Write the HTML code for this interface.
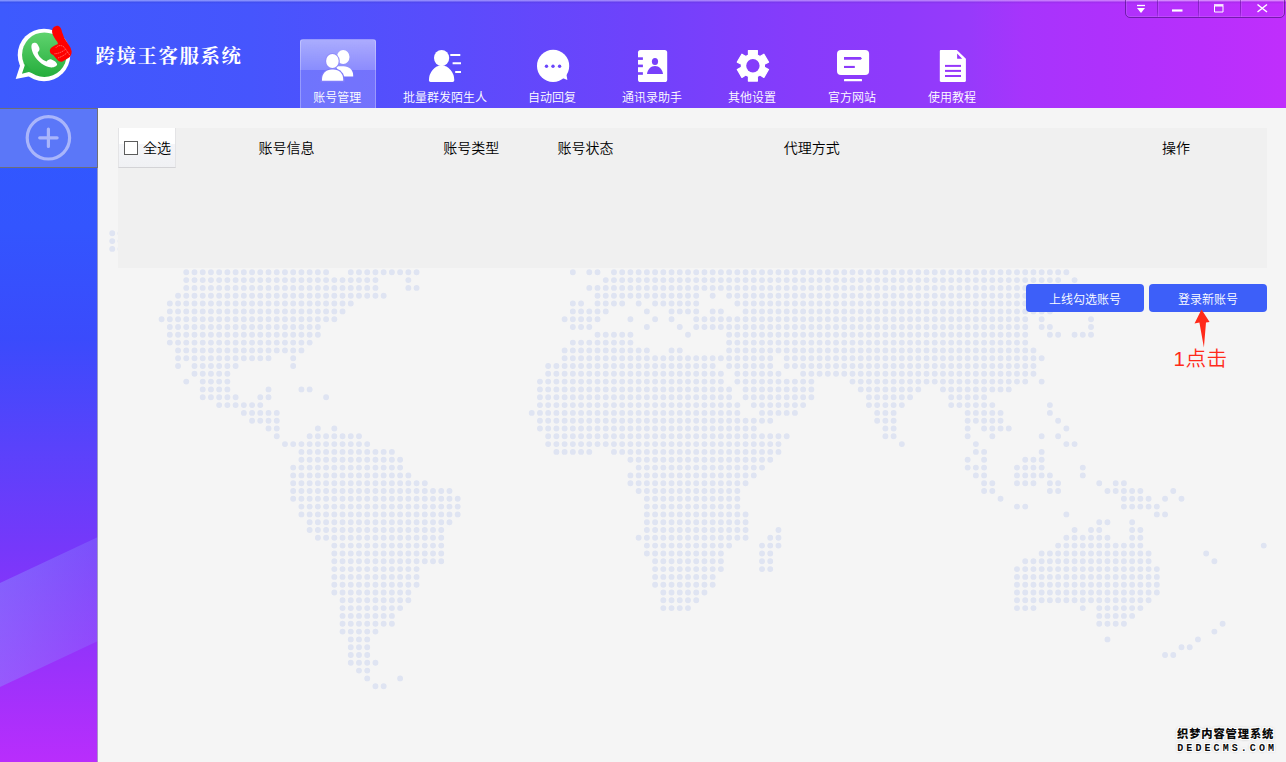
<!DOCTYPE html>
<html lang="zh-CN">
<head>
<meta charset="utf-8">
<title>跨境王客服系统</title>
<style>
*{box-sizing:border-box;margin:0;padding:0}
html,body{width:1286px;height:762px;overflow:hidden;background:#f5f5f5}
body{position:relative;font-weight:350;font-family:"Liberation Sans","Noto Sans CJK SC",sans-serif;color:#000}
#hdr{position:absolute;left:0;top:0;width:1286px;height:108px;
 background:linear-gradient(90deg,#3d5afe 0px,#4655fd 250px,#5a4cfc 450px,#6f42fb 640px,#873bfb 800px,#8f3afb 900px,#973afb 970px,#a734fc 1025px,#ae31fc 1100px,#b72ffc 1200px,#c02efc 1286px);}
#hdr .topline{position:absolute;left:0;top:0;width:1286px;height:4px;background:linear-gradient(180deg,rgba(255,255,255,.36) 0,rgba(255,255,255,.32) 1px,rgba(0,0,80,.09) 2px,rgba(0,0,80,0) 4px)}
#title{position:absolute;left:95.5px;top:40.5px;height:32px;line-height:32px;font-family:"Liberation Serif","Noto Serif CJK SC",serif;font-weight:700;font-size:19.4px;color:#fff;white-space:nowrap;letter-spacing:1.62px}
#logo{position:absolute;left:10px;top:20px}
.nav{position:absolute;top:39px;height:69px;color:#fff;font-size:12px;text-align:center;white-space:nowrap}
.nav .lbl{position:absolute;left:-40px;right:-40px;top:51px;height:16px;line-height:16px;text-align:center}
.nav.act .lbl{top:50px;left:-41.5px;right:-40px}
.nav.act{border:1px solid rgba(255,255,255,.28);border-bottom:none;border-radius:3px 3px 0 0;
 background:linear-gradient(180deg,rgba(255,255,255,.52) 0,rgba(255,255,255,.34) 30px,rgba(255,255,255,.2) 30.5px,rgba(255,255,255,.2) 100%)}
#wc{position:absolute;left:1125px;top:-1px;width:160px;height:19px;border:1px solid rgba(60,10,110,.55);border-radius:0 0 5px 5px;box-shadow:inset 0 0 0 1px rgba(255,255,255,.12)}
#wc i{position:absolute;top:0;width:1px;height:17px;background:linear-gradient(180deg,rgba(60,10,110,.4) 0,rgba(60,10,110,.35) 70%,rgba(60,10,110,.1) 100%);box-shadow:1px 0 0 rgba(255,255,255,.1)}
#side{position:absolute;left:0;top:108px;width:98px;height:654px;overflow:hidden;
 background:linear-gradient(180deg,#3058ff 0,#3355fe 120px,#3a4bfc 230px,#5a42fb 340px,#7638fa 440px,#9a32fb 560px,#b92dfc 654px)}
#side .band{position:absolute;left:0;top:0;width:98px;height:654px;background:linear-gradient(100deg,rgba(140,150,255,.6) 0,rgba(140,130,255,.22) 100%);clip-path:polygon(0 475px,98px 429px,98px 533px,0 579px)}
#side .edge{position:absolute;right:0;top:0;width:1px;height:654px;background:rgba(170,170,190,.8)}
#add{position:absolute;left:0;top:0;width:98px;height:60px;background:#5b77f8;border:1px solid #6d6f78;border-left:none}
#tbl{position:absolute;left:118px;top:128px;width:1149px;height:140px;background:#f0f0f0}
#tbl .h{position:absolute;top:10px;height:20px;line-height:20px;font-size:14px;width:100px;margin-left:-50px;text-align:center;white-space:nowrap}
#selall{position:absolute;left:0;top:0;width:58px;height:40px;border:1px solid #e4e4e6;border-bottom-color:#d3d3d6;border-top:none;
 background:linear-gradient(180deg,#ffffff 0,#ffffff 16px,#f4f5f8 16.5px,#f0f1f4 100%);font-size:14px}
#selall .cb{position:absolute;left:5px;top:13px;width:14px;height:14px;border:1px solid #5c5c5c;background:#fff}
#selall span{position:absolute;left:24px;top:10px;line-height:20px;height:20px}
.btn{position:absolute;top:284px;height:28px;line-height:32px;border-radius:4px;background:#3d5ff9;color:#fff;font-size:12px;text-align:center;white-space:nowrap}
#hint{position:absolute;left:1173.6px;top:347px;font-size:20.6px;line-height:24px;color:#ff2a1a;white-space:nowrap;letter-spacing:.4px}
#wm{position:absolute;left:1177px;top:726px;width:102px;height:28px;font-weight:900;color:#0a0a0a;white-space:nowrap;text-shadow:-1px 0 0 #fff,1px 0 0 #fff,0 -1px 0 #fff,0 1px 0 #fff,-1px -1px 0 #fff,1px 1px 0 #fff,-1px 1px 0 #fff,1px -1px 0 #fff,0 0 3px rgba(120,120,120,.9)}
#wm .a{position:absolute;left:0;top:.3px;font-size:11.3px;line-height:16px;letter-spacing:.85px;font-family:"Liberation Sans","Noto Sans CJK SC",sans-serif}
#wm .b{position:absolute;left:.3px;top:16.9px;font-size:10px;line-height:12px;letter-spacing:3.07px;font-family:"Liberation Mono",monospace;font-weight:700}
#map{position:absolute;left:98px;top:108px}
</style>
</head>
<body>
<svg id="map" width="1188" height="654" viewBox="98 108 1188 654"><defs><filter id="bl" x="98" y="108" width="1188" height="654" filterUnits="userSpaceOnUse"><feGaussianBlur stdDeviation="0.55"/></filter></defs><g id="dots"><path fill="none" stroke="#dfe4f2" stroke-width="5.9" filter="url(#bl)" stroke-linecap="round" stroke-dasharray="0 8.225" d="M112.25 233.2h8.42M112.25 241.1h8.42M112.25 248.9h8.42M186.27 272.3h140.03M350.77 272.3h66.00M572.85 272.3h0.20M589.30 272.3h8.43M613.98 272.3h452.57M186.27 280.1h189.38M408.35 280.1h0.20M605.75 280.1h452.57M1074.57 280.1h0.20M186.27 287.9h189.38M408.35 287.9h8.42M589.30 287.9h469.03M178.05 295.7h205.82M597.52 295.7h98.90M712.67 295.7h0.20M729.12 295.7h320.97M169.82 303.5h181.15M572.85 303.5h8.42M597.52 303.5h24.87M638.65 303.5h0.20M655.10 303.5h41.33M737.35 303.5h304.52M169.82 311.4h172.92M572.85 311.4h33.10M646.88 311.4h0.20M671.55 311.4h24.88M712.67 311.4h8.43M745.58 311.4h304.52M161.60 319.2h172.92M564.62 319.2h33.10M630.42 319.2h0.20M655.10 319.2h0.20M671.55 319.2h0.20M696.23 319.2h329.20M1041.67 319.2h0.20M1091.02 319.2h0.20M169.82 327.0h148.25M572.85 327.0h16.65M646.88 327.0h0.20M679.77 327.0h0.20M696.23 327.0h329.20M1041.67 327.0h8.42M1091.02 327.0h0.20M169.82 334.8h148.25M597.52 334.8h33.10M688.00 334.8h0.20M729.12 334.8h296.30M1049.90 334.8h8.43M1074.57 334.8h16.65M169.82 342.6h140.02M572.85 342.6h57.77M729.12 342.6h296.30M178.05 350.4h123.57M564.62 350.4h82.45M671.55 350.4h8.43M729.12 350.4h304.52M178.05 358.2h90.67M293.20 358.2h0.20M564.62 358.2h205.82M786.70 358.2h255.17M178.05 366.0h0.20M194.50 366.0h41.33M293.20 366.0h0.20M548.17 366.0h164.70M729.12 366.0h41.33M786.70 366.0h246.95M194.50 373.8h33.10M548.17 373.8h172.93M737.35 373.8h41.33M803.15 373.8h230.50M186.27 381.6h0.20M202.72 381.6h24.87M539.95 381.6h181.15M737.35 381.6h74.22M852.50 381.6h172.92M1041.67 381.6h0.20M202.72 389.4h24.87M268.52 389.4h0.20M301.42 389.4h8.43M539.95 389.4h189.38M745.58 389.4h66.00M860.73 389.4h57.77M942.98 389.4h66.00M202.72 397.3h33.10M260.30 397.3h8.43M326.10 397.3h0.20M539.95 397.3h189.38M745.58 397.3h66.00M868.95 397.3h41.33M951.20 397.3h33.10M219.17 405.1h41.32M539.95 405.1h197.60M753.80 405.1h49.55M868.95 405.1h33.10M951.20 405.1h41.33M1049.90 405.1h0.20M243.85 412.9h33.10M531.73 412.9h205.82M762.02 412.9h33.10M877.17 412.9h16.65M967.65 412.9h33.10M1049.90 412.9h0.20M252.07 420.7h24.88M539.95 420.7h230.50M877.17 420.7h16.65M967.65 420.7h33.10M1058.12 420.7h0.20M268.52 428.5h8.43M317.88 428.5h0.20M334.32 428.5h0.20M539.95 428.5h214.05M885.40 428.5h8.43M967.65 428.5h0.20M984.10 428.5h24.87M1066.35 428.5h0.20M276.75 436.3h0.20M309.65 436.3h49.55M548.17 436.3h238.73M885.40 436.3h8.43M967.65 436.3h0.20M992.32 436.3h0.20M1041.67 436.3h0.20M1058.12 436.3h0.20M284.98 444.1h82.45M548.17 444.1h230.50M901.85 444.1h0.20M975.88 444.1h0.20M1066.35 444.1h8.42M301.42 451.9h90.68M556.40 451.9h33.10M613.98 451.9h164.70M975.88 451.9h8.43M1041.67 451.9h0.20M301.42 459.7h98.90M630.42 459.7h140.03M967.65 459.7h0.20M984.10 459.7h0.20M1025.22 459.7h16.65M293.20 467.6h107.13M638.65 467.6h123.58M967.65 467.6h16.65M1017.00 467.6h24.87M1082.80 467.6h0.20M293.20 475.4h115.35M630.42 475.4h123.58M975.88 475.4h8.43M1017.00 475.4h33.10M1082.80 475.4h0.20M293.20 483.2h131.80M630.42 483.2h115.35M984.10 483.2h8.42M1017.00 483.2h16.65M1049.90 483.2h8.43M1099.25 483.2h0.20M1115.70 483.2h8.43M293.20 491.0h156.48M638.65 491.0h98.90M984.10 491.0h8.42M1049.90 491.0h8.43M1107.47 491.0h33.10M1173.27 491.0h0.20M293.20 498.8h164.70M646.88 498.8h90.68M1000.55 498.8h0.20M1123.92 498.8h24.87M1165.05 498.8h0.20M1181.50 498.8h0.20M301.42 506.6h156.47M646.88 506.6h90.68M1017.00 506.6h8.42M1123.92 506.6h33.10M301.42 514.4h156.47M646.88 514.4h98.90M1066.35 514.4h0.20M1156.82 514.4h8.43M309.65 522.2h140.03M646.88 522.2h98.90M1099.25 522.2h8.42M1132.15 522.2h0.20M309.65 530.0h131.80M646.88 530.0h98.90M778.48 530.0h0.20M1074.57 530.0h0.20M1091.02 530.0h8.43M1132.15 530.0h8.43M317.88 537.8h123.58M638.65 537.8h107.13M770.25 537.8h8.43M1066.35 537.8h41.33M1132.15 537.8h8.43M334.32 545.6h107.13M646.88 545.6h82.45M762.02 545.6h16.65M1058.12 545.6h82.45M1263.75 545.6h0.20M334.32 553.5h107.13M646.88 553.5h74.22M762.02 553.5h8.43M1041.67 553.5h107.12M1206.17 553.5h0.20M334.32 561.3h107.13M655.10 561.3h66.00M762.02 561.3h8.43M1025.22 561.3h123.58M1214.40 561.3h0.20M334.32 569.1h82.45M655.10 569.1h66.00M762.02 569.1h8.43M1017.00 569.1h140.02M334.32 576.9h82.45M655.10 576.9h57.77M1017.00 576.9h140.02M334.32 584.7h82.45M655.10 584.7h57.77M1017.00 584.7h140.02M334.32 592.5h74.23M663.32 592.5h41.33M1017.00 592.5h140.02M342.55 600.3h66.00M663.32 600.3h33.10M1017.00 600.3h131.80M342.55 608.1h57.78M663.32 608.1h24.88M1017.00 608.1h16.65M1082.80 608.1h0.20M1099.25 608.1h41.33M342.55 615.9h49.55M1099.25 615.9h33.10M342.55 623.8h49.55M1099.25 623.8h24.87M1222.62 623.8h0.20M342.55 631.6h33.10M1214.40 631.6h0.20M350.77 639.4h16.65M1107.47 639.4h0.20M1197.95 639.4h0.20M350.77 647.2h16.65M1181.50 647.2h8.42M350.77 655.0h16.65M1165.05 655.0h8.42M350.77 662.8h24.88M359.00 670.6h8.43M367.23 678.4h0.20M400.12 678.4h0.20M375.45 686.2h8.42"/></g></svg>

<div id="hdr">
 <div class="topline"></div>
 <svg id="logo" width="70" height="70" viewBox="0 0 762 762">
  <defs><linearGradient id="gg" x1="0" y1="0" x2="0" y2="1"><stop offset="0" stop-color="#5fd36e"/><stop offset="1" stop-color="#25ad3c"/></linearGradient></defs>
  <circle cx="370" cy="380" r="286" fill="#fff"/>
  <path d="M62 642 L118 470 L300 650 L215 612 Z" fill="#fff"/>
  <circle cx="374" cy="378" r="243" fill="url(#gg)"/>
  <path d="M130 586 L168 470 L262 582 L205 566 Z" fill="#2bb143"/>
  <path d="M262 248 C 285 240, 305 262, 318 300 C 326 322, 318 338, 302 352 C 300 384, 350 440, 398 452 C 412 434, 432 422, 452 430 C 482 442, 510 462, 513 482 C 512 502, 480 518, 450 516 C 380 512, 296 452, 260 382 C 238 340, 226 290, 238 264 C 244 252, 254 250, 262 248 Z" fill="#fff"/>
  <path d="M505 64 C 540 60, 560 90, 566 130 L 592 200 C 622 250, 662 290, 671 340 C 674 380, 652 400, 640 412 L 572 452 C 540 462, 520 440, 500 416 L 470 382 C 440 372, 424 340, 440 314 C 450 294, 490 276, 522 262 L 516 240 C 490 200, 455 160, 458 116 C 460 86, 480 68, 505 64 Z" fill="#fe0000"/>
  <path d="M500 302 C 520 272, 570 270, 592 300 M484 368 C 524 368, 580 342, 602 320 M522 414 C 560 400, 600 380, 626 350 M592 300 L 652 384" stroke="#ffd8d0" stroke-width="5" stroke-dasharray="14 7" fill="none"/>
 </svg>
 <div id="title">跨境王客服系统</div>

 <div class="nav act" style="left:300px;width:76px"><div class="lbl">账号管理</div></div>
 <div class="nav" style="left:405px;width:80px"><div class="lbl">批量群发陌生人</div></div>
 <div class="nav" style="left:512px;width:80px"><div class="lbl">自动回复</div></div>
 <div class="nav" style="left:612px;width:80px"><div class="lbl">通讯录助手</div></div>
 <div class="nav" style="left:712px;width:80px"><div class="lbl">其他设置</div></div>
 <div class="nav" style="left:812px;width:80px"><div class="lbl">官方网站</div></div>
 <div class="nav" style="left:912px;width:80px"><div class="lbl">使用教程</div></div>


 <svg id="icons" width="1286" height="108" viewBox="0 0 1286 108" style="position:absolute;left:0;top:0" fill="#fff">
  <!-- account management -->
  <ellipse cx="343.2" cy="57" rx="6.3" ry="6.9"/>
  <path d="M336 66.2h7.5c5.6 0 9.7 3.9 9.7 9.2v1h-12z"/>
  <ellipse cx="332.4" cy="61" rx="7.4" ry="7.9" fill="#8f8bfb"/>
  <path d="M320.6 82.2v-2.600000000000001c0-6.2 4.6-11 11.2-11h1.6c6.600000000000001 0 11.2 4.8 11.2 11v2.600000000000001z" fill="#7f7cfb"/>
  <ellipse cx="332.4" cy="61" rx="6.3" ry="6.9"/>
  <path d="M322 80.8v-1.6c0-5.4 4.100000000000001-9.6 9.8-9.6h1.6c5.7 0 9.8 4.2 9.8 9.6v1.6z"/>
  <!-- bulk send -->
  <ellipse cx="441.6" cy="58.1" rx="7.6" ry="8.1"/>
  <path d="M428.9 80.2A12.7 14.6 0 0 1 454.3 80.2Q454.3 82 452.6 82H430.6Q428.9 82 428.9 80.2Z"/>
  <path d="M450.3 55h10M452.6 63.3h8.4M455.200000000000003 72h5.8" stroke="#fff" stroke-width="2.1" fill="none"/>
  <!-- auto reply -->
  <circle cx="553.1" cy="65.9" r="16.1"/>
  <path d="M560 77l7.4 3-1.6-9z"/>
  <g fill="#6a45fb"><circle cx="546.5" cy="66.3" r="1.7"/><circle cx="553" cy="66.3" r="1.7"/><circle cx="559.6" cy="66.3" r="1.7"/></g>
  <!-- contacts -->
  <rect x="638" y="49.9" width="29.2" height="32.1" rx="2.6"/>
  <g fill="#7840fb"><rect x="637.5" y="57.3" width="5.4" height="2.6"/><rect x="637.5" y="64.6" width="5.4" height="2.6"/><rect x="637.5" y="72.2" width="5.4" height="2.6"/>
  <ellipse cx="655" cy="61.4" rx="3.1" ry="3.5"/><path d="M647 74c.6-4.700000000000003 3.8-8 8-8s7.4 3.299999999999997 8 8z"/></g>
  <!-- settings -->
  <path d="M757.3 55.1 L757.4 50.5 L748.4 50.5 L748.5 55.1 L745.8 56.6 L741.9 54.2 L737.3 62.1 L741.4 64.3 L741.4 67.3 L737.3 69.5 L741.9 77.4 L745.8 75.0 L748.5 76.5 L748.4 81.1 L757.4 81.1 L757.3 76.5 L760.0 75.0 L763.9 77.4 L768.5 69.5 L764.4 67.3 L764.4 64.3 L768.5 62.1 L763.9 54.2 L760.0 56.6Z" stroke="#fff" stroke-width="1.2" stroke-linejoin="round"/>
  <circle cx="752.9" cy="65.8" r="6.7" fill="#843dfb"/>
  <!-- website -->
  <rect x="837" y="49.9" width="32.1" height="25.2" rx="4"/>
  <rect x="844" y="79.1" width="18" height="2.2" rx=".5"/>
  <g fill="#8c3afb"><path d="M844 57h16.6l1.4 1.4-1.4 1.4h-16.6z"/><rect x="844" y="65.9" width="10.8" height="2.1"/></g>
  <!-- tutorial -->
  <path d="M941 49.9h15.8l9.1 8.9v22c0 .7-.5 1.2-1.200000000000003 1.2h-23.7c-.7 0-1.200000000000003-.5-1.200000000000003-1.2v-29.700000000000003c0-.7.5-1.200000000000003 1.200000000000003-1.200000000000003z"/>
  <g fill="#9637fb"><path d="M957.1 53.6v5.2h5.1z"/><rect x="945" y="64.9" width="16" height="2"/><rect x="945" y="69.9" width="16" height="2"/><rect x="945" y="75" width="16" height="2"/></g>
 </svg>
 <div id="wc"><i style="left:31px"></i><i style="left:72px"></i><i style="left:114px"></i>
  <svg width="158" height="18" viewBox="1126 0 158 18" style="position:absolute;left:0;top:0">
   <path d="M1137 5.5h8" stroke="#fff" stroke-width="1.3" fill="none"/>
   <path d="M1137 8h8l-4 5z" fill="#fff"/>
   <path d="M1172 10.5h10.5" stroke="#fff" stroke-width="2.2" fill="none"/>
   <path d="M1214.5 6h8.5v6h-8.5z" stroke="#fff" stroke-width="1" fill="none"/><path d="M1214 5h9.5" stroke="#fff" stroke-width="1.6"/>
   <path d="M1257.5 4.5l9.5 7.5M1267 4.5l-9.5 7.5" stroke="#fff" stroke-width="1.5" fill="none"/>
  </svg>
 </div>
</div>

<div id="side">
 <div class="band"></div>
 <div class="edge"></div>
 <div id="add">
  <svg width="97" height="58" viewBox="0 109 97 58" style="position:absolute;left:0;top:0">
   <circle cx="48.4" cy="137.8" r="21.2" fill="none" stroke="#a9b5fb" stroke-width="3.2"/>
   <path d="M39.7 137.8h17.4M48.4 129.1v17.4" stroke="#a9b5fb" stroke-width="3.2" stroke-linecap="round" fill="none"/>
  </svg>
 </div>
</div>

<div id="tbl">
 <div id="selall"><div class="cb"></div><span>全选</span></div>
 <div class="h" style="left:168.5px">账号信息</div>
 <div class="h" style="left:353.3px">账号类型</div>
 <div class="h" style="left:467.6px">账号状态</div>
 <div class="h" style="left:693.7px">代理方式</div>
 <div class="h" style="left:1058px">操作</div>
</div>

<div class="btn" style="left:1026px;width:118px">上线勾选账号</div>
<div class="btn" style="left:1149px;width:118px">登录新账号</div>
<svg width="30" height="44" viewBox="1188 306 30 44" style="position:absolute;left:1188px;top:306px">
 <path d="M1201.5 309.6 L1209.6 322 L1206 322.4 L1203.9 347.6 L1199.4 322.4 L1194.5 323.6 Z" fill="#ff2a1a"/>
</svg>
<div id="hint">1点击</div>

<div id="wm"><div class="a">织梦内容管理系统</div><div class="b">DEDECMS.COM</div></div>
</body>
</html>
